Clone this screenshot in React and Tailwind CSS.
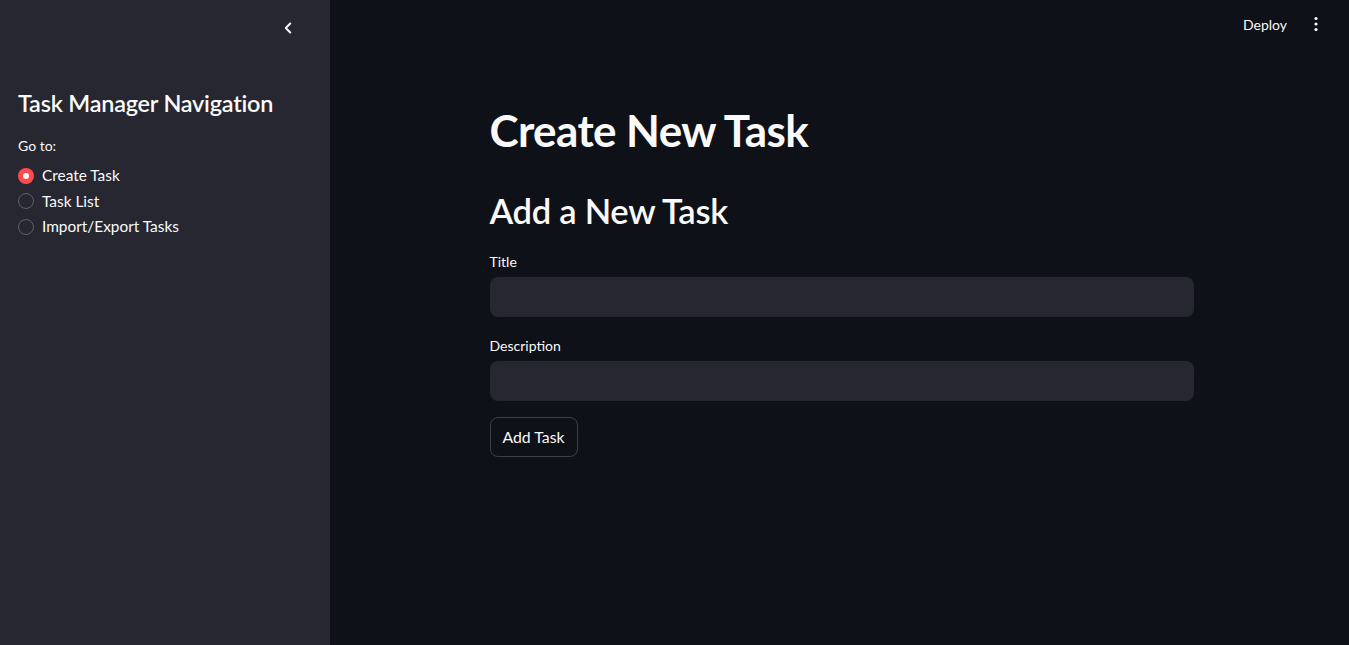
import React from "react";

function Radio({ checked, label }) {
  return (
    <div className="flex items-center h-[25.5px]">
      {checked ? (
        <span className="w-4 h-4 rounded-full bg-[#ff4b4b] flex items-center justify-center">
          <span className="w-1.5 h-1.5 rounded-full bg-[#fafafa]" />
        </span>
      ) : (
        <span className="w-4 h-4 rounded-full border border-[#5f6068]" />
      )}
      <span className="ml-2 text-[15.4px] text-[#fafafa]">{label}</span>
    </div>
  );
}

export default function App() {
  const font = { fontFamily: "Lato, 'Liberation Sans', sans-serif" };
  return (
    <div className="flex w-full h-[645px] bg-[#0e1117] text-[#fafafa]" style={font}>
      <aside className="w-[330px] shrink-0 bg-[#262730] px-[18px] flex flex-col">
        <div className="flex justify-end pt-[19px] pr-[15px]">
          <svg width="18" height="18" viewBox="0 0 24 24" fill="none" stroke="#fafafa" strokeWidth="2.6" strokeLinecap="round" strokeLinejoin="round">
            <path d="M15 6l-6 6 6 6" />
          </svg>
        </div>
        <h2 className="mt-[51px] text-[23.4px] font-semibold leading-[30px] tracking-[-0.2px]">Task Manager Navigation</h2>
        <div className="mt-[19px] text-[14px] leading-[18px]">Go to:</div>
        <div className="mt-[8px] flex flex-col">
          <Radio checked label="Create Task" />
          <Radio label="Task List" />
          <Radio label="Import/Export Tasks" />
        </div>
      </aside>
      <main className="flex-1 flex flex-col">
        <header className="h-[50px] flex items-center justify-end pr-[31px] pb-[2px]">
          <span className="text-[14px] mr-[27px] ml-[2px]">Deploy</span>
          <svg width="4" height="16" viewBox="0 0 4 16" fill="#fafafa">
            <circle cx="2" cy="2.5" r="1.6" />
            <circle cx="2" cy="8" r="1.6" />
            <circle cx="2" cy="13.5" r="1.6" />
          </svg>
        </header>
        <div className="flex justify-center">
          <div className="w-[704px] ml-[4px]">
            <h1 className="mt-[56px] text-[44px] font-bold leading-[48px] tracking-[-0.6px]">Create New Task</h1>
            <h2 className="mt-[35px] text-[34.6px] font-semibold leading-[44px] tracking-[-0.3px]">Add a New Task</h2>
            <label className="block mt-[20px] text-[14px] leading-[18px]">Title</label>
            <div className="mt-[6px] h-[40px] rounded-lg bg-[#262730]" />
            <label className="block mt-[20px] text-[14px] leading-[18px]">Description</label>
            <div className="mt-[6px] h-[40px] rounded-lg bg-[#262730]" />
            <button className="mt-[16px] h-[40px] px-[12px] rounded-lg border border-[#fafafa33] text-[15.8px] text-[#fafafa] bg-transparent">
              Add Task
            </button>
          </div>
        </div>
      </main>
    </div>
  );
}
